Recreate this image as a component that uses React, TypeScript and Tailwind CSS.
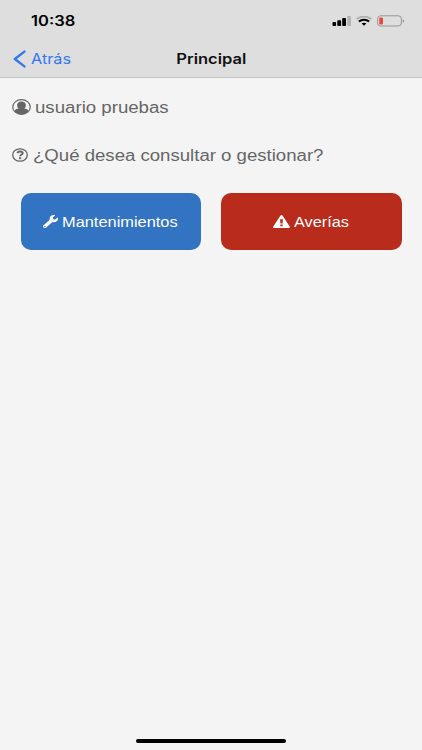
import React from "react";
import { FaWrench } from "react-icons/fa";

function StatusBar() {
  return (
    <div className="flex h-[41px] items-center justify-between pl-[31px] pr-[17px]">
      <span className="origin-left scale-x-[1.18] whitespace-nowrap pt-px font-['Inter',sans-serif] text-[14px] font-semibold leading-none text-black">
        10:38
      </span>
      <div className="flex items-center gap-[5px]">
        <svg className="h-[10px] w-[19px]" viewBox="0 0 19 10" aria-hidden="true">
          <rect x="0.5" y="6" width="3.6" height="4" rx="0.8" />
          <rect x="5.3" y="4.2" width="3.8" height="5.8" rx="0.8" />
          <rect x="10.2" y="2" width="3.8" height="8" rx="0.8" />
          <rect x="15.2" y="0" width="3.8" height="10" rx="0.8" fill="#b4b4b4" />
        </svg>
        <svg className="h-[10px] w-[16px]" viewBox="0 0 15 10" preserveAspectRatio="none" fill="none" aria-hidden="true">
          <path d="M0.6 3.2C4.4 -0.3 10.6 -0.3 14.4 3.2" stroke="#b0b0b0" strokeWidth="1.8" />
          <path d="M2.7 5.5C5.4 3.1 9.6 3.1 12.3 5.5" stroke="#000" strokeWidth="1.9" />
          <path d="M5.3 7.6C6.6 6.6 8.4 6.6 9.7 7.6L7.5 9.8Z" fill="#000" />
        </svg>
        <svg className="h-[12px] w-[28px]" viewBox="0 0 28 12" fill="none" aria-hidden="true">
          <rect x="0.6" y="0.8" width="23.8" height="10.2" rx="3" stroke="#969696" />
          <rect x="2.2" y="2.4" width="3.8" height="7" rx="1.2" fill="#e74b3b" />
          <path d="M25.8 4.2C27.4 4.8 27.4 7 25.8 7.6Z" fill="#858585" />
        </svg>
      </div>
    </div>
  );
}

function NavBar() {
  return (
    <div className="grid h-[36px] grid-cols-3 items-center">
      <button className="flex items-center gap-[5px] pl-[13px] text-[#3478ee]">
        <svg className="h-[18px] w-[13px]" viewBox="0 0 13 18" fill="none" aria-hidden="true">
          <path d="M11.4 1.6L1.8 9L11.4 16.4" stroke="currentColor" strokeWidth="2.4" strokeLinecap="round" strokeLinejoin="round" />
        </svg>
        <span className="origin-left scale-x-[1.12] font-['Inter',sans-serif] text-[14.5px] leading-none">Atrás</span>
      </button>
      <h1 className="scale-x-[1.18] text-center font-['Inter',sans-serif] text-[14px] font-semibold leading-none text-[#111]">
        Principal
      </h1>
    </div>
  );
}

function UserIcon() {
  return (
    <svg className="h-[16px] w-[19px] shrink-0" viewBox="0 0 19 16" aria-hidden="true">
      <ellipse cx="9.5" cy="8" rx="8.8" ry="7.3" fill="none" stroke="currentColor" strokeWidth="1.2" />
      <path d="M9.5 2.6C12.2 2.6 13.9 4.1 13.9 6.2C13.9 7.6 13.2 8.9 12.2 9.5C14.7 9.8 16 10.6 16.8 12.2C15 14.3 12.4 15.3 9.5 15.3C6.6 15.3 4 14.3 2.2 12.2C3 10.6 4.3 9.8 6.8 9.5C5.8 8.9 5.1 7.6 5.1 6.2C5.1 4.1 6.8 2.6 9.5 2.6Z" fill="currentColor" />
    </svg>
  );
}

function QuestionIcon() {
  return (
    <svg className="h-[14px] w-[16px] shrink-0" viewBox="0 0 16 14" fill="none" stroke="currentColor" aria-hidden="true">
      <ellipse cx="8" cy="7" rx="7.3" ry="6.2" strokeWidth="1.3" />
      <path d="M5.3 5.2C5.8 3.9 6.8 3.5 8 3.5C9.6 3.5 10.7 4.2 10.7 5.2C10.7 6.8 8.1 6.7 8.1 8.3" strokeWidth="1.9" />
      <path d="M7 10.2H9.2" strokeWidth="1.9" />
    </svg>
  );
}

function WarningIcon() {
  return (
    <svg className="h-[13px] w-[17px] shrink-0" viewBox="0 0 17 13" aria-hidden="true">
      <path
        fill="currentColor"
        fillRule="evenodd"
        d="M7.5 0.6C7.9 -0.1 9.1 -0.1 9.5 0.6L16.7 11.4C17.2 12.2 16.7 13 15.7 13H1.3C0.3 13 -0.2 12.2 0.3 11.4ZM7.1 4.2L7.4 8.5H9.6L9.9 4.2ZM7.3 9.4V11.2H9.7V9.4Z"
      />
    </svg>
  );
}

export default function App() {
  return (
    <div className="flex h-[750px] w-[422px] flex-col overflow-hidden bg-[#f4f4f4] font-['Liberation_Sans',Arial,sans-serif]">
      <header className="h-[78px] border-b border-[#c6c6c6] bg-[#dedede]">
        <StatusBar />
        <NavBar />
      </header>
      <main className="flex-1 text-[#666]">
        <div className="flex h-[57px] items-center gap-[4px] pl-[12px]">
          <UserIcon />
          <span className="origin-left scale-x-[1.165] whitespace-nowrap pt-[2px] text-[16px] leading-none">usuario pruebas</span>
        </div>
        <div className="flex h-[40px] items-center gap-[5px] pl-[12px]">
          <QuestionIcon />
          <span className="origin-left scale-x-[1.162] whitespace-nowrap pt-px text-[16px] leading-none">¿Qué desea consultar o gestionar?</span>
        </div>
        <div className="mt-[17px] grid grid-cols-2 gap-[20px] px-[20.5px] pt-[0.5px]">
          <button className="flex h-[57.5px] items-center gap-[4px] rounded-[10px] bg-[#3273c2] pl-[22px] text-white">
            <FaWrench className="mt-px h-[13px] w-[15px] shrink-0" preserveAspectRatio="none" />
            <span className="origin-left scale-x-[1.17] whitespace-nowrap pt-px text-[14px] leading-none">Mantenimientos</span>
          </button>
          <button className="flex h-[57.5px] items-center gap-[4px] rounded-[10px] bg-[#b92b1b] pl-[52px] text-white">
            <WarningIcon />
            <span className="origin-left scale-x-[1.165] whitespace-nowrap pt-px text-[14px] leading-none">Averías</span>
          </button>
        </div>
      </main>
      <footer className="flex h-[11px] justify-center">
        <div className="h-[4px] w-[150px] rounded-full bg-black" />
      </footer>
    </div>
  );
}
